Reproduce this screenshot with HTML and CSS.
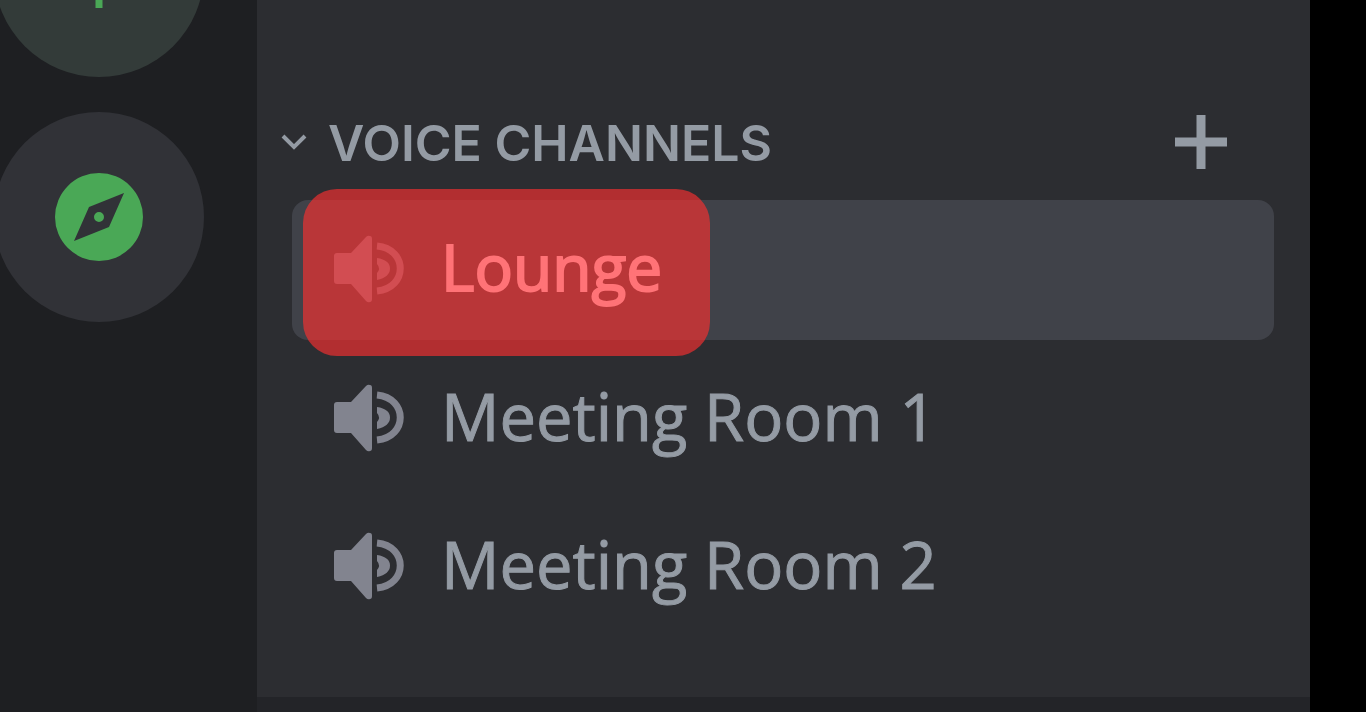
FILE: index.html
```html
<!DOCTYPE html>
<html lang="en">
<head>
<meta charset="utf-8">
<title>Voice Channels</title>
<link rel="stylesheet" href="styles.css">
</head>
<body>
<svg class="symbols" aria-hidden="true">
  <symbol id="speaker" viewBox="0 0 72 68">
    <path fill="currentColor" d="M4 18H18L33 2Q35 0 37 1Q39 1 39 4V64Q39 67 37 67Q35 68 33 66L18 49H4Q1 49 1 46V21Q1 18 4 18Z"/>
    <path fill="none" stroke="currentColor" stroke-width="7" d="M44 11C75 14 75 53 44 56"/>
    <path fill="currentColor" d="M44 23Q57 25 57 33.500Q57 42 44 45V38Q48 33.500 44 29Z"/>
  </symbol>
</svg>
<div class="app">
  <nav class="rail" aria-label="Servers">
    <button class="server server-add" type="button" aria-label="Add a server">
      <svg viewBox="0 0 72 72" aria-hidden="true"><path d="M36 0V72M0 36H72" stroke="currentColor" stroke-width="7"/></svg>
    </button>
    <button class="server" type="button" aria-label="Explore servers">
      <svg viewBox="0 0 88 88" aria-hidden="true">
        <path fill="currentColor" fill-rule="evenodd" d="M44 0A44 44 0 1 1 44 88A44 44 0 1 1 44 0ZM69 20L34 34L19 68L54 54ZM44 39A5 5 0 1 1 44 49A5 5 0 1 1 44 39Z"/>
      </svg>
    </button>
  </nav>
  <main class="sidebar">
    <section class="group">
      <header class="group-head">
        <button class="toggle" type="button" aria-expanded="true">
          <svg class="chevron" viewBox="0 0 28 20" aria-hidden="true"><path d="M3 4L14 15L25 4" fill="none" stroke="currentColor" stroke-width="4"/></svg>
          <span class="title">VOICE CHANNELS</span>
        </button>
        <button class="create" type="button" aria-label="Create channel">
          <svg viewBox="0 0 54 56" aria-hidden="true"><path d="M27 1V55M1 28H53" stroke="currentColor" stroke-width="9"/></svg>
        </button>
      </header>
      <div class="channels">
        <a class="channel selected" href="#lounge"><svg class="speaker" aria-hidden="true"><use href="#speaker"/></svg><span class="name">Lounge</span></a>
        <a class="channel" href="#room-1"><svg class="speaker" aria-hidden="true"><use href="#speaker"/></svg><span class="name">Meeting Room 1</span></a>
        <a class="channel" href="#room-2"><svg class="speaker" aria-hidden="true"><use href="#speaker"/></svg><span class="name">Meeting Room 2</span></a>
      </div>
    </section>
    <footer class="panel"></footer>
  </main>
</div>
</body>
</html>
```
FILE: styles.css
```css
* {
  box-sizing: border-box;
}

body {
  margin: 0;
  background: #000;
  color: #949ba4;
  font-family: "Open Sans", "Noto Sans", sans-serif;
}

button {
  padding: 0;
  border: 0;
  background: none;
  color: inherit;
  font: inherit;
  cursor: pointer;
}

svg {
  display: block;
}

.symbols {
  display: none;
}

.app {
  display: flex;
  height: 100vh;
  padding-right: 56px;
  overflow: hidden;
}

.rail {
  display: flex;
  flex: 0 0 257px;
  flex-direction: column;
  gap: 35px;
  margin-top: -133px;
  background: #1e1f22;
}

.server {
  display: grid;
  flex: none;
  place-items: center;
  width: 210px;
  height: 210px;
  margin-left: -6px;
  border-radius: 50%;
  background: #313237;
  color: #4aa856;
}

.server svg {
  width: 88px;
  height: 88px;
}

.server-add {
  background: #333b39;
}

.server-add svg {
  width: 72px;
  height: 72px;
}

.sidebar {
  display: flex;
  flex: 1;
  flex-direction: column;
  min-width: 0;
  background: #2c2d31;
}

.group {
  flex: 1;
  padding-top: 112px;
}

.group-head {
  display: flex;
  align-items: center;
  justify-content: space-between;
  height: 60px;
  padding: 0 82px 0 23px;
}

.toggle {
  display: flex;
  align-items: center;
  gap: 20px;
  font-family: Inter, "Liberation Sans", sans-serif;
  font-size: 50px;
  font-weight: 600;
  line-height: 60px;
  white-space: nowrap;
}

.title {
  padding-top: 2px;
}

.chevron {
  width: 28px;
  height: 20px;
}

.create svg {
  width: 54px;
  height: 56px;
}

.channels {
  display: flex;
  flex-direction: column;
  gap: 8px;
  padding: 28px 36px 0 35px;
}

.channel {
  display: flex;
  position: relative;
  align-items: center;
  gap: 36px;
  height: 140px;
  padding-left: 41px;
  border-radius: 16px;
  color: #949ba4;
  font-size: 65px;
  line-height: 88px;
  text-decoration: none;
  white-space: nowrap;
  -webkit-text-stroke: 1px currentColor;
}

.speaker {
  z-index: 1;
  width: 72px;
  height: 68px;
  color: #82848f;
}

.name {
  z-index: 1;
  padding-bottom: 4px;
}

.selected {
  padding-bottom: 3px;
  background: #404249;
  color: #ff7377;
  font-size: 64px;
  -webkit-text-stroke-width: 2px;
}

.selected .speaker {
  color: #d24d52;
}

.selected::before {
  position: absolute;
  top: -11px;
  bottom: -16px;
  left: 11px;
  width: 407px;
  border-radius: 34px;
  background: rgba(251, 48, 47, 0.65);
  content: "";
}

.panel {
  height: 15px;
  background: #232428;
}
```
